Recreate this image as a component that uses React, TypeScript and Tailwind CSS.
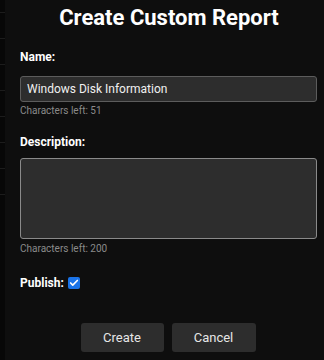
import { Check } from "lucide-react"

const stripLines = [13, 40, 67, 94, 121, 148, 174, 200]

export default function App() {
    return (
        <div className="w-[324px] h-[360px] flex bg-[#0e0e0e] text-white overflow-hidden" style={{ fontFamily: "Roboto, 'Liberation Sans', sans-serif" }}>
            <div className="w-[5px] shrink-0 bg-[#070707] flex flex-col">
                {stripLines.map((y, i) => (
                    <div key={i} className="h-[26px] border-b border-[#1c1c1c] first:h-[13px]" />
                ))}
            </div>
            <div className="flex-1 flex flex-col pl-[15px] pr-[7px]">
                <h1 className="text-center text-[22px] font-bold leading-none mt-[7px] ml-[1px]">Create Custom Report</h1>

                <label className="mt-[22px] text-[12px] font-bold leading-none">Name:</label>
                <div className="mt-[13px] h-[26px] bg-[#2d2d2d] border border-[#5c5c5c] rounded-[3px] flex items-center px-[6px] text-[12px] text-[#f0f0f0]">
                    Windows Disk Information
                </div>
                <div className="mt-[4px] text-[10px] text-[#8a8a8a] leading-none">Characters left: 51</div>

                <label className="mt-[20px] text-[12px] font-bold leading-none">Description:</label>
                <div className="mt-[10px] h-[81px] bg-[#2d2d2d] border border-[#8a8a8a] rounded-[3px]" />
                <div className="mt-[5px] text-[10px] text-[#8a8a8a] leading-none">Characters left: 200</div>

                <div className="mt-[23px] flex items-center gap-[4px]">
                    <span className="text-[12px] font-bold leading-none">Publish:</span>
                    <span className="w-[12px] h-[12px] rounded-[2px] bg-[#1a73e8] flex items-center justify-center">
                        <Check className="w-[10px] h-[10px] text-white" strokeWidth={4} />
                    </span>
                </div>

                <div className="mt-[34px] flex justify-center gap-[8px] ml-[-1px]">
                    <button className="w-[83px] h-[29px] bg-[#2d2d2d] rounded-[3px] text-[13px] text-[#e6e6e6]">Create</button>
                    <button className="w-[84px] h-[29px] bg-[#2d2d2d] rounded-[3px] text-[13px] text-[#e6e6e6]">Cancel</button>
                </div>
            </div>
        </div>
    )
}
